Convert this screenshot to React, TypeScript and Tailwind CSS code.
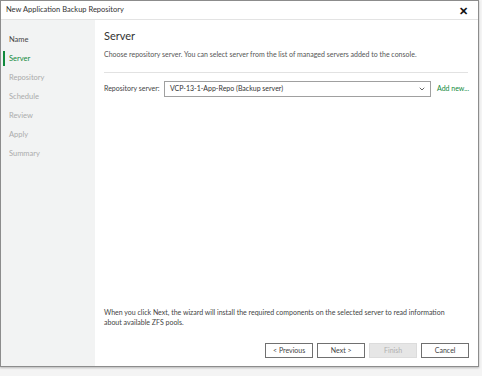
import { ChevronDown } from 'lucide-react';

const steps = ['Name', 'Server', 'Repository', 'Schedule', 'Review', 'Apply', 'Summary'];

export default function App() {
  const current = 1;

  return (
    <div
      className="w-[482px] h-[376px] bg-[#f4f4f4] overflow-hidden"
      style={{ fontFamily: 'Lato, "Open Sans", sans-serif' }}
    >
      <div className="w-[479px] h-[367px] bg-white border border-[#8c8c8c] flex flex-col shadow-[0_1px_2px_rgba(0,0,0,0.25)]">
        {/* Title bar */}
        <div className="h-[19px] shrink-0 flex items-center justify-between pl-[5px] pr-[10px] border-b border-[#e3e3e3]">
          <span className="text-[7.5px] text-[#333]">New Application Backup Repository</span>
          <span className="text-[11px] font-bold leading-none text-[#111]">✕</span>
        </div>

        <div className="flex flex-1 min-h-0">
          {/* Steps */}
          <div className="w-[94px] shrink-0 bg-[#f2f3f3] pt-[10px] flex flex-col">
            {steps.map((s, i) => (
              <div key={s} className="h-[19px] flex items-center relative pl-[8px]">
                {i === current && <div className="absolute left-[2px] top-[2px] bottom-[2px] w-[2px] bg-[#118a3c]" />}
                <span
                  className={
                    'text-[7.5px] ' +
                    (i === current ? 'text-[#118a3c]' : i < current ? 'text-[#444]' : 'text-[#ababab]')
                  }
                >
                  {s}
                </span>
              </div>
            ))}
          </div>

          {/* Content */}
          <div className="flex-1 flex flex-col pl-[9px] pr-[9px] pt-[9px] pb-[8px]">
            <div className="text-[11px] text-[#333] leading-[14px]">Server</div>
            <div className="text-[7px] text-[#555] mt-[6px] whitespace-nowrap">
              Choose repository server. You can select server from the list of managed servers added to the console.
            </div>
            <div className="h-px bg-[#e2e2e2] mt-[12px] mr-[1px]" />

            <div className="flex items-center mt-[8px]">
              <span className="text-[7px] text-[#444] w-[60px] shrink-0 whitespace-nowrap">Repository server:</span>
              <div className="w-[267px] shrink-0 h-[16px] border border-[#a0a0a0] flex items-center justify-between pl-[5px] pr-[4px]">
                <span className="text-[7px] text-[#333] whitespace-nowrap">VCP-13-1-App-Repo (Backup server)</span>
                <ChevronDown size={8} strokeWidth={2.5} className="text-[#444]" />
              </div>
              <span className="text-[7px] text-[#118a3c] ml-[6px] whitespace-nowrap">Add new...</span>
            </div>

            <div className="flex-1" />

            <div className="text-[7px] text-[#444] leading-[10px] whitespace-nowrap">
              When you click Next, the wizard will install the required components on the selected server to read information
              <br />
              about available ZFS pools.
            </div>

            <div className="flex justify-end gap-[4px] mt-[16px]">
              <button className="w-[48px] h-[15px] border border-[#707070] bg-white text-[7px] text-[#444]">&lt; Previous</button>
              <button className="w-[48px] h-[15px] border border-[#707070] bg-white text-[7px] text-[#444]">Next &gt;</button>
              <button className="w-[48px] h-[15px] border border-[#dcdcdc] bg-[#e6e6e6] text-[7px] text-[#b0b0b0]">Finish</button>
              <button className="w-[48px] h-[15px] border border-[#707070] bg-white text-[7px] text-[#444]">Cancel</button>
            </div>
          </div>
        </div>
      </div>
    </div>
  );
}
